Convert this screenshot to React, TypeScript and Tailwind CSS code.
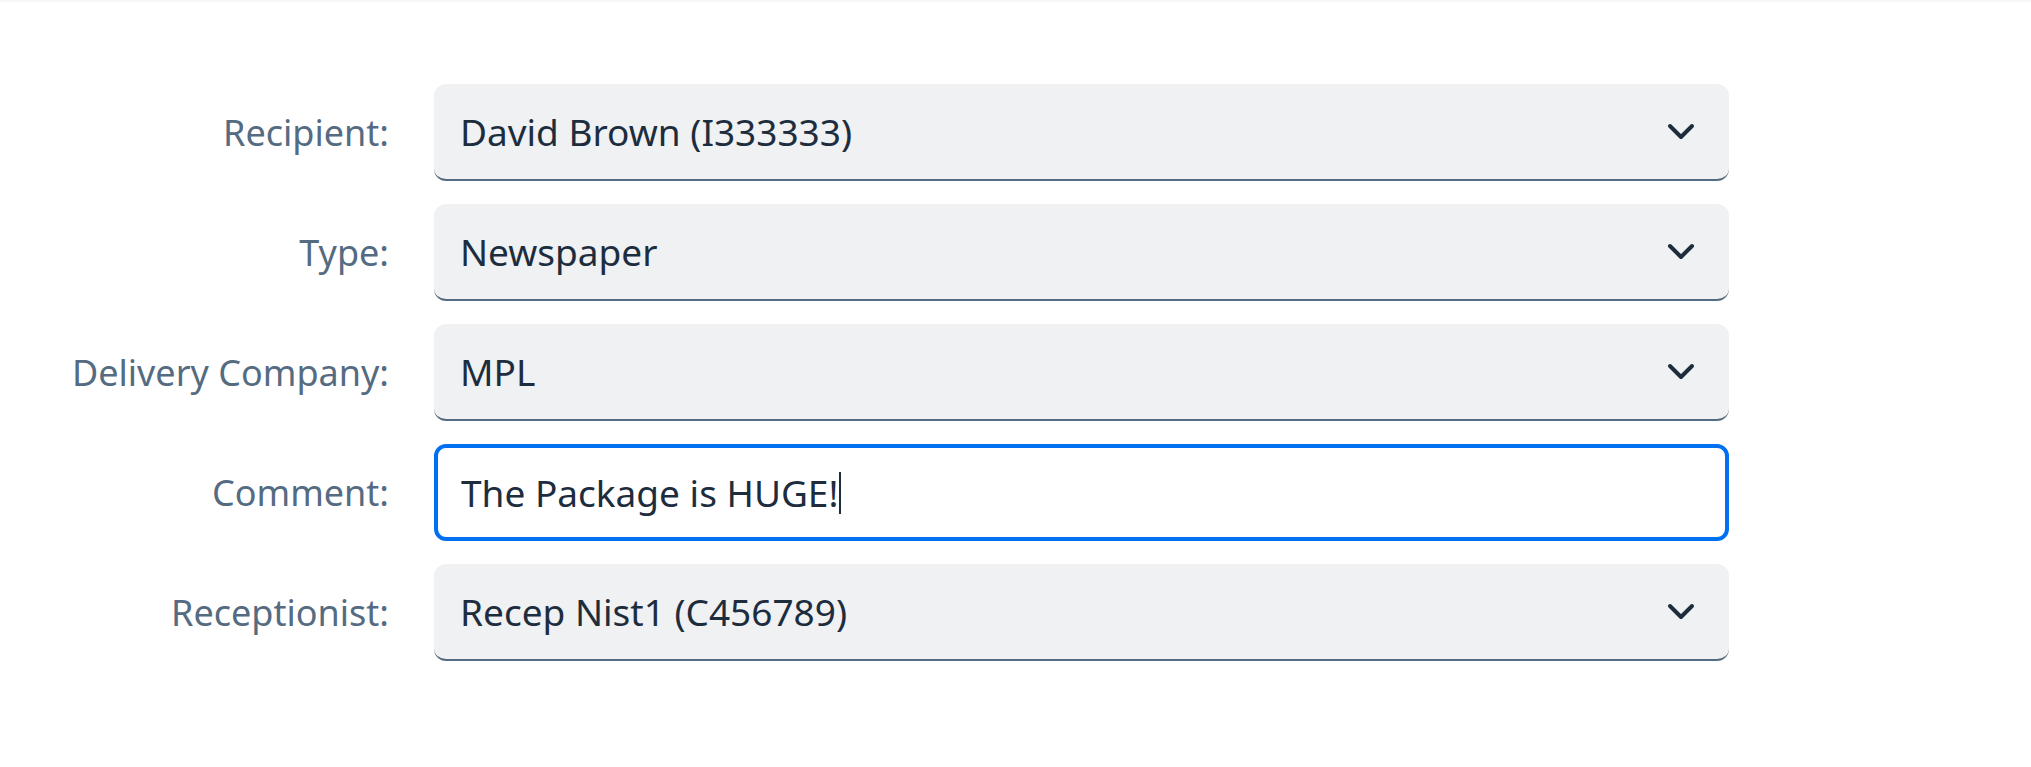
const rows = [
  { label: "Recipient:", value: "David Brown (I333333)", select: true },
  { label: "Type:", value: "Newspaper", select: true },
  { label: "Delivery Company:", value: "MPL", select: true },
  { label: "Comment:", value: "The Package is HUGE!", select: false },
  { label: "Receptionist:", value: "Recep Nist1 (C456789)", select: true },
];

const Chevron = () => (
  <svg width="28" height="18" viewBox="0 0 28 18" fill="none" className="shrink-0">
    <path d="M3 3 L14 14 L25 3" stroke="#1d2d3e" strokeWidth="4" strokeLinecap="round" strokeLinejoin="round" />
  </svg>
);

const App = () => {
  return (
    <div
      className="w-[2031px] h-[767px] bg-white border-t-2 border-[#f5f6f7]"
      style={{ fontFamily: '"Noto Sans", "Open Sans", sans-serif' }}
    >
      <div className="flex flex-col gap-[23px] pt-[82px]">
        {rows.map((r) => (
          <div key={r.label} className="flex items-center">
            <div className="w-[389px] text-right text-[36px] text-[#556b82] leading-none">
              {r.label}
            </div>
            <div className="ml-[45px] w-[1295px]">
              {r.select ? (
                <div className="h-[97px] flex items-center justify-between pl-[26px] pr-[34px] bg-[#eff1f2] rounded-[12px] border-b-2 border-[#556b82]">
                  <span className="text-[37px] text-[#1d2d3e] leading-none">{r.value}</span>
                  <Chevron />
                </div>
              ) : (
                <div className="h-[97px] flex items-center pl-[23px] bg-white rounded-[12px] border-4 border-[#0070f2]">
                  <span className="text-[37px] text-[#1d2d3e] leading-none">{r.value}</span>
                  <span className="w-[2px] h-[42px] bg-[#1d2d3e] ml-[1px]" />
                </div>
              )}
            </div>
          </div>
        ))}
      </div>
    </div>
  );
};

export default App;
